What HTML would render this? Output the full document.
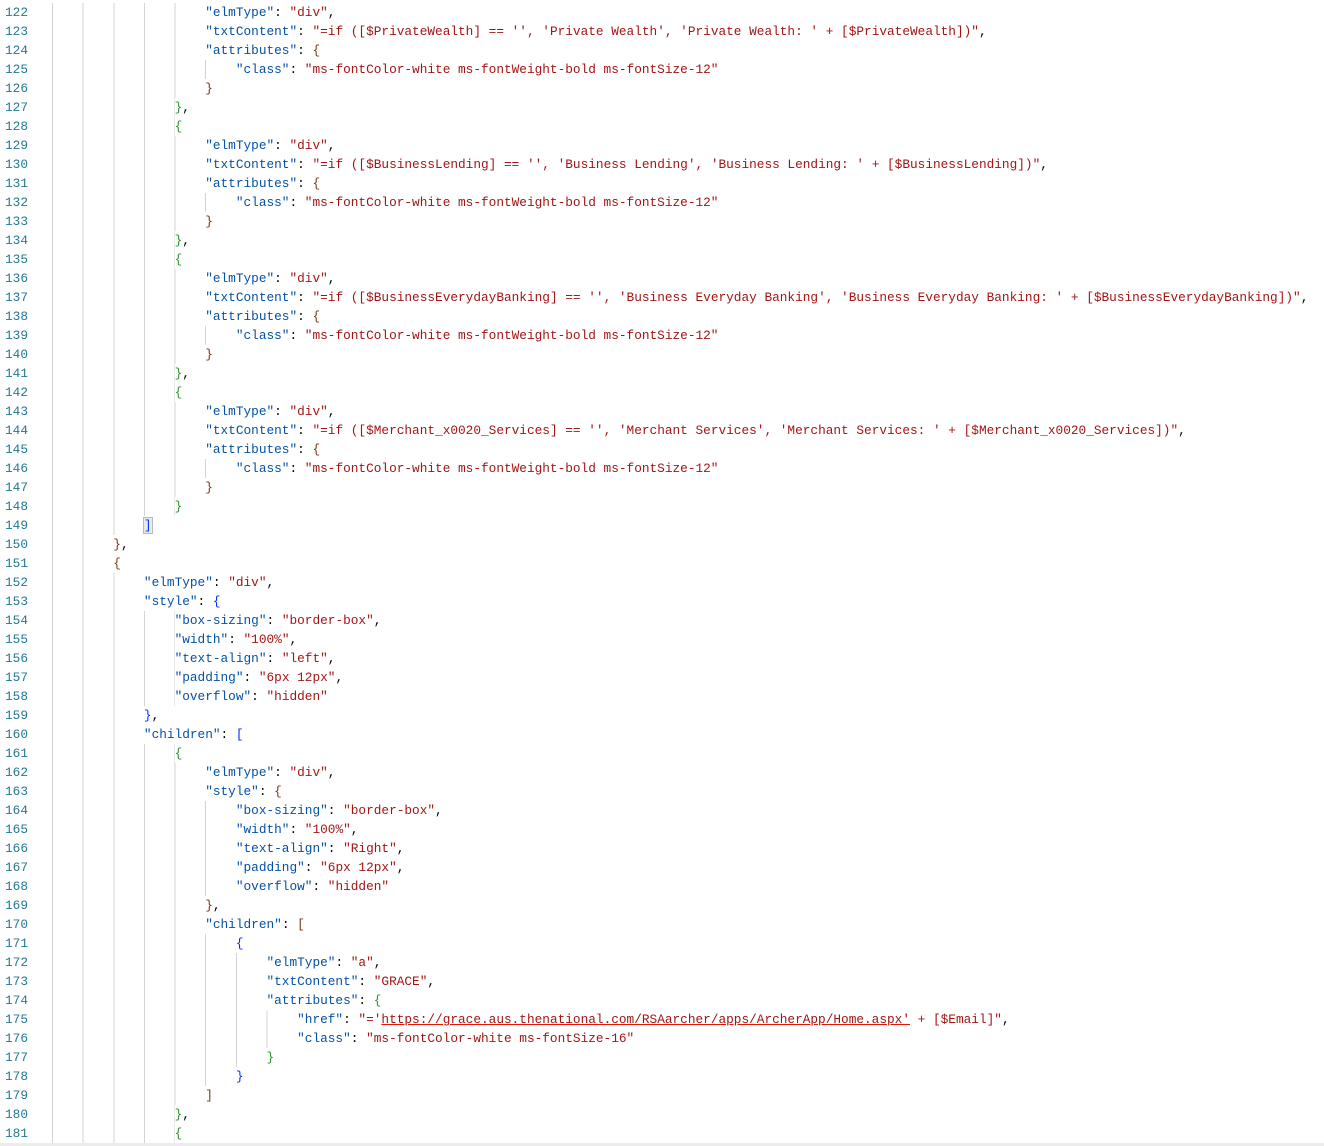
<!DOCTYPE html>
<html><head><meta charset="utf-8"><style>
html,body{margin:0;padding:0;background:#fff;width:1324px;height:1146px;overflow:hidden}
#ed{position:absolute;left:0;top:3px;font-family:"Liberation Mono",monospace;font-size:12.78px;line-height:19px;color:#000}
.l{height:19px;position:relative;overflow:visible}
.n{position:absolute;left:5px;top:0;color:#237893}
.c{position:absolute;left:52px;top:0;white-space:pre;height:19px}
.g{display:inline-block;height:19px;vertical-align:top;background:repeating-linear-gradient(to right,#d3d3d3 0 1px,transparent 1px 4ch)}
.k{color:#0451a5}.s{color:#a31515}
.b1{color:#7b3814}.b2{color:#0431fa}.b3{color:#319331}
.u{text-decoration:underline;text-decoration-color:#e51400}
.hl{outline:1px solid #b9b9b9;background:#e8ece8}
#bot{position:absolute;left:0;top:1143px;width:1324px;height:3px;background:#ececec}
</style></head><body>
<div id="ed"><div class="l"><span class="n">122</span><span class="c"><span class="g" style="width:20ch"></span><span class="k">"elmType"</span>: <span class="s">"div"</span>,</span></div><div class="l"><span class="n">123</span><span class="c"><span class="g" style="width:20ch"></span><span class="k">"txtContent"</span>: <span class="s">"=if ([$PrivateWealth] == '', 'Private Wealth', 'Private Wealth: ' + [$PrivateWealth])"</span>,</span></div><div class="l"><span class="n">124</span><span class="c"><span class="g" style="width:20ch"></span><span class="k">"attributes"</span>: <span class="b1">{</span></span></div><div class="l"><span class="n">125</span><span class="c"><span class="g" style="width:24ch"></span><span class="k">"class"</span>: <span class="s">"ms-fontColor-white ms-fontWeight-bold ms-fontSize-12"</span></span></div><div class="l"><span class="n">126</span><span class="c"><span class="g" style="width:20ch"></span><span class="b1">}</span></span></div><div class="l"><span class="n">127</span><span class="c"><span class="g" style="width:16ch"></span><span class="b3">}</span>,</span></div><div class="l"><span class="n">128</span><span class="c"><span class="g" style="width:16ch"></span><span class="b3">{</span></span></div><div class="l"><span class="n">129</span><span class="c"><span class="g" style="width:20ch"></span><span class="k">"elmType"</span>: <span class="s">"div"</span>,</span></div><div class="l"><span class="n">130</span><span class="c"><span class="g" style="width:20ch"></span><span class="k">"txtContent"</span>: <span class="s">"=if ([$BusinessLending] == '', 'Business Lending', 'Business Lending: ' + [$BusinessLending])"</span>,</span></div><div class="l"><span class="n">131</span><span class="c"><span class="g" style="width:20ch"></span><span class="k">"attributes"</span>: <span class="b1">{</span></span></div><div class="l"><span class="n">132</span><span class="c"><span class="g" style="width:24ch"></span><span class="k">"class"</span>: <span class="s">"ms-fontColor-white ms-fontWeight-bold ms-fontSize-12"</span></span></div><div class="l"><span class="n">133</span><span class="c"><span class="g" style="width:20ch"></span><span class="b1">}</span></span></div><div class="l"><span class="n">134</span><span class="c"><span class="g" style="width:16ch"></span><span class="b3">}</span>,</span></div><div class="l"><span class="n">135</span><span class="c"><span class="g" style="width:16ch"></span><span class="b3">{</span></span></div><div class="l"><span class="n">136</span><span class="c"><span class="g" style="width:20ch"></span><span class="k">"elmType"</span>: <span class="s">"div"</span>,</span></div><div class="l"><span class="n">137</span><span class="c"><span class="g" style="width:20ch"></span><span class="k">"txtContent"</span>: <span class="s">"=if ([$BusinessEverydayBanking] == '', 'Business Everyday Banking', 'Business Everyday Banking: ' + [$BusinessEverydayBanking])"</span>,</span></div><div class="l"><span class="n">138</span><span class="c"><span class="g" style="width:20ch"></span><span class="k">"attributes"</span>: <span class="b1">{</span></span></div><div class="l"><span class="n">139</span><span class="c"><span class="g" style="width:24ch"></span><span class="k">"class"</span>: <span class="s">"ms-fontColor-white ms-fontWeight-bold ms-fontSize-12"</span></span></div><div class="l"><span class="n">140</span><span class="c"><span class="g" style="width:20ch"></span><span class="b1">}</span></span></div><div class="l"><span class="n">141</span><span class="c"><span class="g" style="width:16ch"></span><span class="b3">}</span>,</span></div><div class="l"><span class="n">142</span><span class="c"><span class="g" style="width:16ch"></span><span class="b3">{</span></span></div><div class="l"><span class="n">143</span><span class="c"><span class="g" style="width:20ch"></span><span class="k">"elmType"</span>: <span class="s">"div"</span>,</span></div><div class="l"><span class="n">144</span><span class="c"><span class="g" style="width:20ch"></span><span class="k">"txtContent"</span>: <span class="s">"=if ([$Merchant_x0020_Services] == '', 'Merchant Services', 'Merchant Services: ' + [$Merchant_x0020_Services])"</span>,</span></div><div class="l"><span class="n">145</span><span class="c"><span class="g" style="width:20ch"></span><span class="k">"attributes"</span>: <span class="b1">{</span></span></div><div class="l"><span class="n">146</span><span class="c"><span class="g" style="width:24ch"></span><span class="k">"class"</span>: <span class="s">"ms-fontColor-white ms-fontWeight-bold ms-fontSize-12"</span></span></div><div class="l"><span class="n">147</span><span class="c"><span class="g" style="width:20ch"></span><span class="b1">}</span></span></div><div class="l"><span class="n">148</span><span class="c"><span class="g" style="width:16ch"></span><span class="b3">}</span></span></div><div class="l"><span class="n">149</span><span class="c"><span class="g" style="width:12ch"></span><span class="b2 hl">]</span></span></div><div class="l"><span class="n">150</span><span class="c"><span class="g" style="width:8ch"></span><span class="b1">}</span>,</span></div><div class="l"><span class="n">151</span><span class="c"><span class="g" style="width:8ch"></span><span class="b1">{</span></span></div><div class="l"><span class="n">152</span><span class="c"><span class="g" style="width:12ch"></span><span class="k">"elmType"</span>: <span class="s">"div"</span>,</span></div><div class="l"><span class="n">153</span><span class="c"><span class="g" style="width:12ch"></span><span class="k">"style"</span>: <span class="b2">{</span></span></div><div class="l"><span class="n">154</span><span class="c"><span class="g" style="width:16ch"></span><span class="k">"box-sizing"</span>: <span class="s">"border-box"</span>,</span></div><div class="l"><span class="n">155</span><span class="c"><span class="g" style="width:16ch"></span><span class="k">"width"</span>: <span class="s">"100%"</span>,</span></div><div class="l"><span class="n">156</span><span class="c"><span class="g" style="width:16ch"></span><span class="k">"text-align"</span>: <span class="s">"left"</span>,</span></div><div class="l"><span class="n">157</span><span class="c"><span class="g" style="width:16ch"></span><span class="k">"padding"</span>: <span class="s">"6px 12px"</span>,</span></div><div class="l"><span class="n">158</span><span class="c"><span class="g" style="width:16ch"></span><span class="k">"overflow"</span>: <span class="s">"hidden"</span></span></div><div class="l"><span class="n">159</span><span class="c"><span class="g" style="width:12ch"></span><span class="b2">}</span>,</span></div><div class="l"><span class="n">160</span><span class="c"><span class="g" style="width:12ch"></span><span class="k">"children"</span>: <span class="b2">[</span></span></div><div class="l"><span class="n">161</span><span class="c"><span class="g" style="width:16ch"></span><span class="b3">{</span></span></div><div class="l"><span class="n">162</span><span class="c"><span class="g" style="width:20ch"></span><span class="k">"elmType"</span>: <span class="s">"div"</span>,</span></div><div class="l"><span class="n">163</span><span class="c"><span class="g" style="width:20ch"></span><span class="k">"style"</span>: <span class="b1">{</span></span></div><div class="l"><span class="n">164</span><span class="c"><span class="g" style="width:24ch"></span><span class="k">"box-sizing"</span>: <span class="s">"border-box"</span>,</span></div><div class="l"><span class="n">165</span><span class="c"><span class="g" style="width:24ch"></span><span class="k">"width"</span>: <span class="s">"100%"</span>,</span></div><div class="l"><span class="n">166</span><span class="c"><span class="g" style="width:24ch"></span><span class="k">"text-align"</span>: <span class="s">"Right"</span>,</span></div><div class="l"><span class="n">167</span><span class="c"><span class="g" style="width:24ch"></span><span class="k">"padding"</span>: <span class="s">"6px 12px"</span>,</span></div><div class="l"><span class="n">168</span><span class="c"><span class="g" style="width:24ch"></span><span class="k">"overflow"</span>: <span class="s">"hidden"</span></span></div><div class="l"><span class="n">169</span><span class="c"><span class="g" style="width:20ch"></span><span class="b1">}</span>,</span></div><div class="l"><span class="n">170</span><span class="c"><span class="g" style="width:20ch"></span><span class="k">"children"</span>: <span class="b1">[</span></span></div><div class="l"><span class="n">171</span><span class="c"><span class="g" style="width:24ch"></span><span class="b2">{</span></span></div><div class="l"><span class="n">172</span><span class="c"><span class="g" style="width:28ch"></span><span class="k">"elmType"</span>: <span class="s">"a"</span>,</span></div><div class="l"><span class="n">173</span><span class="c"><span class="g" style="width:28ch"></span><span class="k">"txtContent"</span>: <span class="s">"GRACE"</span>,</span></div><div class="l"><span class="n">174</span><span class="c"><span class="g" style="width:28ch"></span><span class="k">"attributes"</span>: <span class="b3">{</span></span></div><div class="l"><span class="n">175</span><span class="c"><span class="g" style="width:32ch"></span><span class="k">"href"</span>: <span class="s">"='<span class="u">https://grace.aus.thenational.com/RSAarcher/apps/ArcherApp/Home.aspx'</span> + [$Email]"</span>,</span></div><div class="l"><span class="n">176</span><span class="c"><span class="g" style="width:32ch"></span><span class="k">"class"</span>: <span class="s">"ms-fontColor-white ms-fontSize-16"</span></span></div><div class="l"><span class="n">177</span><span class="c"><span class="g" style="width:28ch"></span><span class="b3">}</span></span></div><div class="l"><span class="n">178</span><span class="c"><span class="g" style="width:24ch"></span><span class="b2">}</span></span></div><div class="l"><span class="n">179</span><span class="c"><span class="g" style="width:20ch"></span><span class="b1">]</span></span></div><div class="l"><span class="n">180</span><span class="c"><span class="g" style="width:16ch"></span><span class="b3">}</span>,</span></div><div class="l"><span class="n">181</span><span class="c"><span class="g" style="width:16ch"></span><span class="b3">{</span></span></div></div>
<div id="bot"></div>
</body></html>
